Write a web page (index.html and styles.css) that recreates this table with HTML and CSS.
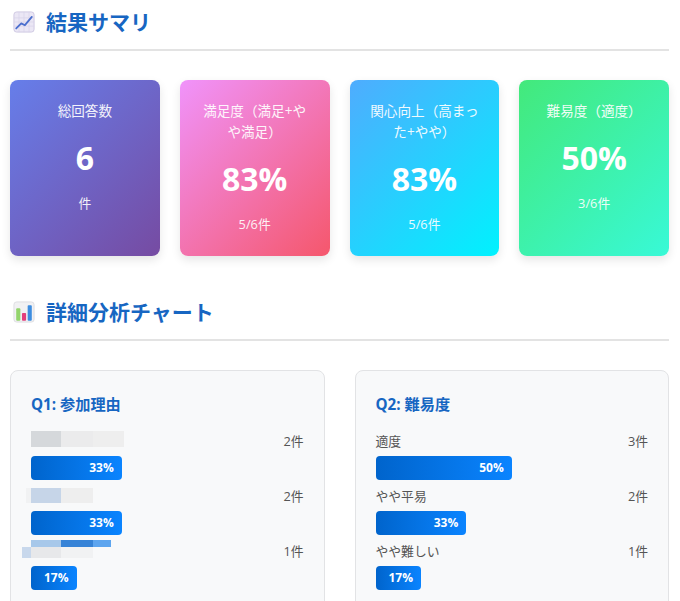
FILE: index.html
```html
<!DOCTYPE html>
<html lang="ja">
<head>
<meta charset="utf-8">
<title>結果サマリ</title>
<link rel="stylesheet" href="styles.css">
</head>
<body>
<main class="page">
  <h2 class="section-title">
    <svg class="title-icon" viewBox="0 0 24 24" aria-hidden="true">
      <rect x="1" y="1" width="22" height="22" rx="3" fill="#ebe7f5" stroke="#cdc6e0" stroke-width="1"/>
      <path d="M1 7.5H23M1 12H23M1 16.5H23M6.5 1V23M12 1V23M17.5 1V23" stroke="#d9d3ea" stroke-width="0.8" fill="none"/>
      <polyline points="3.5,19 9,13.5 13,15.5 20.5,6.5" fill="none" stroke="#4c6fce" stroke-width="2" stroke-linecap="round" stroke-linejoin="round"/>
    </svg>
    <span>結果サマリ</span>
  </h2>

  <section class="stats">
    <div class="stat stat-purple">
      <div class="stat-label">総回答数</div>
      <div class="stat-value">6</div>
      <div class="stat-sub">件</div>
    </div>
    <div class="stat stat-pink">
      <div class="stat-label">満足度（満足+やや満足）</div>
      <div class="stat-value">83%</div>
      <div class="stat-sub">5/6件</div>
    </div>
    <div class="stat stat-blue">
      <div class="stat-label">関心向上（高まった+やや）</div>
      <div class="stat-value">83%</div>
      <div class="stat-sub">5/6件</div>
    </div>
    <div class="stat stat-green">
      <div class="stat-label">難易度（適度）</div>
      <div class="stat-value">50%</div>
      <div class="stat-sub">3/6件</div>
    </div>
  </section>

  <h2 class="section-title">
    <svg class="title-icon" viewBox="0 0 24 24" aria-hidden="true">
      <rect x="1" y="1" width="22" height="22" rx="3" fill="#f1f1f3" stroke="#dcdce0" stroke-width="1"/>
      <rect x="3.5" y="8" width="4.5" height="13.5" rx="1" fill="#93d46c"/>
      <rect x="9.8" y="13" width="4.5" height="8.5" rx="1" fill="#e33f7c"/>
      <rect x="16" y="4.5" width="4.5" height="17" rx="1" fill="#3d8de0"/>
    </svg>
    <span>詳細分析チャート</span>
  </h2>

  <section class="charts">
    <div class="chart">
      <h3 class="chart-title">Q1: 参加理由</h3>
      <div class="row">
        <div class="row-head">
          <svg class="mosaic mosaic-1" width="93" height="20" viewBox="0 0 93 20" aria-hidden="true">
            <rect x="0" y="0" width="30" height="16" fill="#d5d8db"/>
            <rect x="30" y="0" width="32" height="16" fill="#ebebec"/>
            <rect x="62" y="0" width="31" height="16" fill="#eeeeee"/>
          </svg>
          <span class="count">2件</span>
        </div>
        <div class="track"><div class="bar" style="width:33.3%">33%</div></div>
      </div>
      <div class="row">
        <div class="row-head">
          <svg class="mosaic mosaic-2" width="67" height="20" viewBox="0 0 67 20" aria-hidden="true">
            <rect x="0" y="2" width="5" height="15" fill="#f1f2f3"/>
            <rect x="5" y="2" width="30" height="15" fill="#c6d5e8"/>
            <rect x="35" y="2" width="32" height="15" fill="#eeeeee"/>
          </svg>
          <span class="count">2件</span>
        </div>
        <div class="track"><div class="bar" style="width:33.3%">33%</div></div>
      </div>
      <div class="row">
        <div class="row-head">
          <svg class="mosaic mosaic-3" width="89" height="20" viewBox="0 0 89 20" aria-hidden="true">
            <rect x="9" y="0" width="30" height="7" fill="#a7c8ea"/>
            <rect x="39" y="0" width="32" height="7" fill="#3683d7"/>
            <rect x="71" y="0" width="18" height="7" fill="#5da5ef"/>
            <rect x="0" y="7" width="9" height="11" fill="#c8d8ec"/>
            <rect x="9" y="7" width="30" height="11" fill="#e7e8ea"/>
            <rect x="39" y="7" width="32" height="11" fill="#f1f2f3"/>
          </svg>
          <span class="count">1件</span>
        </div>
        <div class="track"><div class="bar" style="width:16.7%">17%</div></div>
      </div>
    </div>

    <div class="chart">
      <h3 class="chart-title">Q2: 難易度</h3>
      <div class="row">
        <div class="row-head">
          <span class="label">適度</span>
          <span class="count">3件</span>
        </div>
        <div class="track"><div class="bar" style="width:50%">50%</div></div>
      </div>
      <div class="row">
        <div class="row-head">
          <span class="label">やや平易</span>
          <span class="count">2件</span>
        </div>
        <div class="track"><div class="bar" style="width:33.3%">33%</div></div>
      </div>
      <div class="row">
        <div class="row-head">
          <span class="label">やや難しい</span>
          <span class="count">1件</span>
        </div>
        <div class="track"><div class="bar" style="width:16.7%">17%</div></div>
      </div>
    </div>
  </section>
</main>
</body>
</html>
```

FILE: styles.css
```css
* { box-sizing: border-box; }

html, body {
  margin: 0;
  padding: 0;
  background: #ffffff;
}

body {
  font-family: "Open Sans", "Noto Sans CJK JP", sans-serif;
  color: #333333;
}

.page {
  padding: 8px 11px 0 10px;
}

.section-title {
  display: flex;
  align-items: center;
  margin: 0 0 29px;
  padding-bottom: 13px;
  border-bottom: 2px solid #e3e3e3;
  font-size: 21px;
  line-height: 28px;
  font-weight: 700;
  color: #1766c2;
}

.title-icon {
  width: 22px;
  height: 22px;
  margin-left: 3px;
  margin-right: 11px;
  flex: none;
}

.stats {
  display: grid;
  grid-template-columns: repeat(4, 1fr);
  gap: 20px;
  margin-bottom: 42px;
}

.stat {
  border-radius: 8px;
  padding: 20px 20px 22px;
  color: #ffffff;
  text-align: center;
  box-shadow: 0 4px 10px rgba(0, 0, 0, 0.1);
  min-height: 176px;
}

.stat-purple { background: linear-gradient(135deg, #667eea 0%, #764ba2 100%); }
.stat-pink   { background: linear-gradient(135deg, #f093fb 0%, #f5576c 100%); }
.stat-blue   { background: linear-gradient(135deg, #4facfe 0%, #00f2fe 100%); }
.stat-green  { background: linear-gradient(135deg, #43e97b 0%, #38f9d7 100%); }

.stat-label {
  font-size: 13.6px;
  line-height: 21px;
  opacity: 0.92;
}

.stat-value {
  font-size: 32px;
  line-height: 38px;
  font-weight: 700;
  margin: 18px 0 17px;
}

.stat-sub {
  font-size: 12.8px;
  line-height: 18px;
  opacity: 0.9;
}

.charts {
  display: grid;
  grid-template-columns: 1fr 1fr;
  gap: 30px;
}

.chart {
  background: #f8f9fa;
  border: 1px solid #e2e3e5;
  border-radius: 8px;
  padding: 22px 20px 20px;
}

.chart-title {
  margin: 0 0 15px;
  font-size: 15.2px;
  line-height: 23px;
  font-weight: 700;
  color: #1766c2;
}

.row {
  margin-bottom: 6px;
}

.row-head {
  display: flex;
  justify-content: space-between;
  align-items: flex-start;
  height: 20px;
  font-size: 12.8px;
  line-height: 20px;
  color: #555555;
}

.label {
  color: #555555;
}

.count {
  color: #555555;
}

.mosaic {
  display: block;
  flex: none;
}

.mosaic-2 { margin-left: -5px; }
.mosaic-3 { margin-left: -9px; margin-top: -1px; }

.track {
  margin-top: 5px;
  height: 24px;
}

.bar {
  height: 24px;
  border-radius: 4px;
  background: linear-gradient(90deg, #0064cc 0%, #0a84ff 100%);
  color: #ffffff;
  font-size: 12px;
  font-weight: 700;
  line-height: 24px;
  text-align: right;
  padding-right: 8px;
}
```
